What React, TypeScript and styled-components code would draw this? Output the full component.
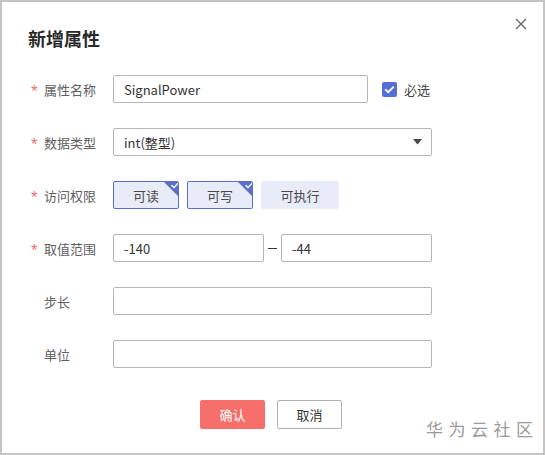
import React from "react";
import styled, { createGlobalStyle } from "styled-components";

const Global = createGlobalStyle`
  html, body { margin: 0; padding: 0; background: #fff; }
  body { font-family: "Noto Sans CJK SC", "Liberation Sans", sans-serif; }
  * { box-sizing: border-box; }
`;

const Frame = styled.div`
  position: relative;
  width: 545px;
  height: 455px;
  border: 2px solid #c4c4c4;
  background: #fff;
  padding: 22px 0 0 26px;
`;

const Header = styled.div`
  display: flex;
  justify-content: space-between;
  align-items: flex-start;
  padding-right: 14px;
`;

const Title = styled.h1`
  margin: 0;
  font-size: 18px;
  line-height: 28px;
  font-weight: 700;
  color: #2b2b2b;
`;

const Close = styled.button`
  border: none;
  background: none;
  padding: 0;
  margin-top: -8px;
  width: 16px;
  height: 16px;
  display: flex;
  align-items: center;
  justify-content: center;
  cursor: pointer;
`;

const Form = styled.div`
  display: flex;
  flex-direction: column;
  gap: 25px;
  margin-top: 23px;
  padding-left: 3px;
`;

const Row = styled.div`
  display: grid;
  grid-template-columns: 82px auto;
  align-items: center;
  height: 28px;
`;

const Label = styled.div`
  display: flex;
  align-items: center;
  font-size: 13px;
  color: #606060;
`;

const Star = styled.span<{ $hidden?: boolean }>`
  width: 13px;
  color: #f4706b;
  font-size: 17px;
  font-family: "Liberation Sans", sans-serif;
  line-height: 13px;
  padding-top: 5px;
  visibility: ${(p) => (p.$hidden ? "hidden" : "visible")};
`;

const Control = styled.div`
  display: flex;
  align-items: center;
`;

const Input = styled.div<{ $w: number }>`
  width: ${(p) => p.$w}px;
  height: 28px;
  border: 1px solid #b5b5b5;
  border-radius: 2px;
  padding: 0 10px;
  display: flex;
  align-items: center;
  font-size: 13px;
  color: #333;
  background: #fff;
`;

const Select = styled(Input)`
  justify-content: space-between;
  padding-right: 9px;
`;

const Check = styled.div`
  margin-left: 14px;
  display: flex;
  align-items: center;
  gap: 7px;
  font-size: 13px;
  color: #444;
`;

const CheckBox = styled.span`
  width: 15px;
  height: 15px;
  border-radius: 2px;
  background: #5470d6;
  display: flex;
  align-items: center;
  justify-content: center;
`;

const Tags = styled.div`
  display: flex;
  gap: 8px;
`;

const Tag = styled.div<{ $on?: boolean; $w: number }>`
  position: relative;
  width: ${(p) => p.$w}px;
  height: 28px;
  border: 1px solid ${(p) => (p.$on ? "#5b6fc8" : "#e8ecf8")};
  border-radius: 2px;
  background: #e8ecf8;
  display: flex;
  align-items: center;
  justify-content: center;
  font-size: 13px;
  color: #4a4a4a;
  overflow: hidden;
`;

const Corner = styled.svg`
  position: absolute;
  top: -1px;
  right: -1px;
`;

const Dash = styled.span`
  width: 9px;
  height: 1px;
  background: #333;
  margin: 0 4px;
`;

const Footer = styled.div`
  display: flex;
  justify-content: center;
  gap: 12px;
  margin-top: 32px;
  margin-left: -29px;
`;

const Button = styled.button<{ $primary?: boolean }>`
  width: 65px;
  height: 29px;
  border-radius: 2px;
  font-family: inherit;
  font-size: 13px;
  border: 1px solid ${(p) => (p.$primary ? "#f76f6a" : "#b0b0b0")};
  background: ${(p) => (p.$primary ? "#f76f6a" : "#fff")};
  color: ${(p) => (p.$primary ? "#fff" : "#333")};
  padding: 0;
`;

const Watermark = styled.div`
  position: absolute;
  right: 10px;
  bottom: 12px;
  font-size: 17px;
  letter-spacing: 5.5px;
  color: #9a9a9a;
  margin-right: -5.5px;
`;

const CornerMark = () => (
  <Corner width="16" height="16" viewBox="0 0 16 16">
    <polygon points="0,0 16,0 16,16" fill="#5b6fc8" />
    <path d="M8.5 4.2 L11 6.6 L15 2.2" stroke="#fff" strokeWidth="1.4" fill="none" />
  </Corner>
);

export default function App() {
  return (
    <>
      <Global />
      <Frame>
        <Header>
          <Title>新增属性</Title>
          <Close aria-label="close">
            <svg width="12" height="12" viewBox="0 0 12 12">
              <path d="M1 1 L11 11 M11 1 L1 11" stroke="#666" strokeWidth="1.3" />
            </svg>
          </Close>
        </Header>
        <Form>
          <Row>
            <Label><Star>*</Star>属性名称</Label>
            <Control>
              <Input $w={255}>SignalPower</Input>
              <Check>
                <CheckBox>
                  <svg width="11" height="9" viewBox="0 0 11 9">
                    <path d="M1.2 4.4 L4.2 7.2 L9.8 1.6" stroke="#fff" strokeWidth="1.8" fill="none" />
                  </svg>
                </CheckBox>
                必选
              </Check>
            </Control>
          </Row>
          <Row>
            <Label><Star>*</Star>数据类型</Label>
            <Control>
              <Select $w={319}>
                <span>int(整型)</span>
                <svg width="9" height="6" viewBox="0 0 9 6">
                  <polygon points="0,0 9,0 4.5,5.5" fill="#4a4a4a" />
                </svg>
              </Select>
            </Control>
          </Row>
          <Row>
            <Label><Star>*</Star>访问权限</Label>
            <Tags>
              <Tag $on $w={66}>可读<CornerMark /></Tag>
              <Tag $on $w={66}>可写<CornerMark /></Tag>
              <Tag $w={78}>可执行</Tag>
            </Tags>
          </Row>
          <Row>
            <Label><Star>*</Star>取值范围</Label>
            <Control>
              <Input $w={151}>-140</Input>
              <Dash />
              <Input $w={151}>-44</Input>
            </Control>
          </Row>
          <Row>
            <Label><Star $hidden>*</Star>步长</Label>
            <Control>
              <Input $w={319} />
            </Control>
          </Row>
          <Row>
            <Label><Star $hidden>*</Star>单位</Label>
            <Control>
              <Input $w={319} />
            </Control>
          </Row>
        </Form>
        <Footer>
          <Button $primary>确认</Button>
          <Button>取消</Button>
        </Footer>
        <Watermark>华为云社区</Watermark>
      </Frame>
    </>
  );
}
